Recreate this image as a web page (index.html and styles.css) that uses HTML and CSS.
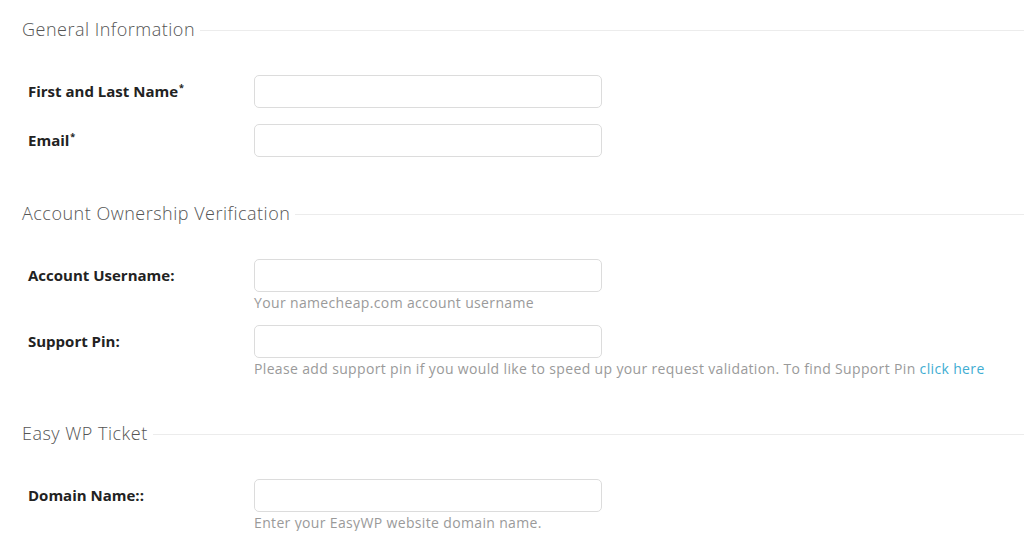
FILE: index.html
```html
<!DOCTYPE html>
<html>
<head>
<meta charset="utf-8">
<link rel="stylesheet" href="styles.css">
</head>
<body>
<form class="form">
  <section class="group">
    <h2 class="group-title"><span>General Information</span></h2>
    <div class="rows">
      <div class="row">
        <label class="label">First and Last Name<sup>*</sup></label>
        <div class="field"><input class="input" type="text"></div>
      </div>
      <div class="row">
        <label class="label">Email<sup>*</sup></label>
        <div class="field"><input class="input" type="text"></div>
      </div>
    </div>
  </section>
  <section class="group">
    <h2 class="group-title"><span>Account Ownership Verification</span></h2>
    <div class="rows">
      <div class="row row-help">
        <label class="label">Account Username:</label>
        <div class="field"><input class="input" type="text"><p class="help">Your namecheap.com account username</p></div>
      </div>
      <div class="row row-help">
        <label class="label">Support Pin:</label>
        <div class="field"><input class="input" type="text"><p class="help">Please add support pin if you would like to speed up your request validation. To find Support Pin <a href="#" class="link">click here</a></p></div>
      </div>
    </div>
  </section>
  <section class="group">
    <h2 class="group-title"><span>Easy WP Ticket</span></h2>
    <div class="rows">
      <div class="row row-help">
        <label class="label">Domain Name::</label>
        <div class="field"><input class="input" type="text"><p class="help">Enter your EasyWP website domain name.</p></div>
      </div>
    </div>
  </section>
</form>
</body>
</html>
```
FILE: styles.css
```css
* { box-sizing: border-box; }
html, body { margin: 0; padding: 0; background: #fff; }
body { font-family: "Open Sans", Lato, Arial, sans-serif; color: #222; }
.form { padding: 19px 0 0 22px; display: flex; flex-direction: column; gap: 46px; }
.group-title {
  margin: 0;
  display: flex;
  align-items: center;
  font-size: 18px;
  line-height: 20px;
  font-weight: 300;
  letter-spacing: 0.5px;
  color: #555;
}
.group-title::after {
  content: "";
  flex: 1;
  height: 1px;
  background: #ececec;
  margin-left: 5px;
  margin-top: 2px;
}
.rows { margin-top: 36px; padding-left: 6px; display: flex; flex-direction: column; }
.row { display: flex; align-items: flex-start; }
.row + .row { margin-top: 16px; }
.row-help + .row { margin-top: 14px; }
.label {
  width: 226px;
  height: 33px;
  padding-bottom: 2px;
  display: flex;
  align-items: center;
  font-size: 15px;
  font-weight: 700;
  color: #222;
}
.label sup { font-size: 9px; align-self: flex-start; margin-top: 6px; margin-left: 1px; }
.field { display: flex; flex-direction: column; }
.input {
  width: 348px;
  height: 33px;
  border: 1px solid #dcdcdc;
  border-radius: 5px;
  margin: 0;
  padding: 0 10px;
  font: inherit;
  background: #fff;
}
.help { margin: 2px 0 0; font-size: 14px; line-height: 17px; letter-spacing: 0.35px; color: #9a9a9a; white-space: nowrap; }
.link { color: #3fadd2; text-decoration: none; }
```
